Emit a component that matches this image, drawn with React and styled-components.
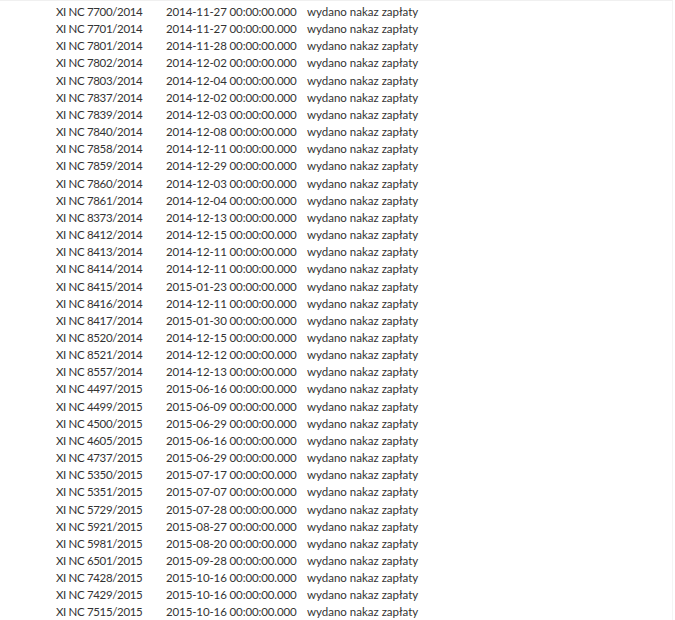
import React from 'react'
import styled, { createGlobalStyle } from 'styled-components'

const rows = [
    ['XI NC 7700/2014', '2014-11-27 00:00:00.000'],
    ['XI NC 7701/2014', '2014-11-27 00:00:00.000'],
    ['XI NC 7801/2014', '2014-11-28 00:00:00.000'],
    ['XI NC 7802/2014', '2014-12-02 00:00:00.000'],
    ['XI NC 7803/2014', '2014-12-04 00:00:00.000'],
    ['XI NC 7837/2014', '2014-12-02 00:00:00.000'],
    ['XI NC 7839/2014', '2014-12-03 00:00:00.000'],
    ['XI NC 7840/2014', '2014-12-08 00:00:00.000'],
    ['XI NC 7858/2014', '2014-12-11 00:00:00.000'],
    ['XI NC 7859/2014', '2014-12-29 00:00:00.000'],
    ['XI NC 7860/2014', '2014-12-03 00:00:00.000'],
    ['XI NC 7861/2014', '2014-12-04 00:00:00.000'],
    ['XI NC 8373/2014', '2014-12-13 00:00:00.000'],
    ['XI NC 8412/2014', '2014-12-15 00:00:00.000'],
    ['XI NC 8413/2014', '2014-12-11 00:00:00.000'],
    ['XI NC 8414/2014', '2014-12-11 00:00:00.000'],
    ['XI NC 8415/2014', '2015-01-23 00:00:00.000'],
    ['XI NC 8416/2014', '2014-12-11 00:00:00.000'],
    ['XI NC 8417/2014', '2015-01-30 00:00:00.000'],
    ['XI NC 8520/2014', '2014-12-15 00:00:00.000'],
    ['XI NC 8521/2014', '2014-12-12 00:00:00.000'],
    ['XI NC 8557/2014', '2014-12-13 00:00:00.000'],
    ['XI NC 4497/2015', '2015-06-16 00:00:00.000'],
    ['XI NC 4499/2015', '2015-06-09 00:00:00.000'],
    ['XI NC 4500/2015', '2015-06-29 00:00:00.000'],
    ['XI NC 4605/2015', '2015-06-16 00:00:00.000'],
    ['XI NC 4737/2015', '2015-06-29 00:00:00.000'],
    ['XI NC 5350/2015', '2015-07-17 00:00:00.000'],
    ['XI NC 5351/2015', '2015-07-07 00:00:00.000'],
    ['XI NC 5729/2015', '2015-07-28 00:00:00.000'],
    ['XI NC 5921/2015', '2015-08-27 00:00:00.000'],
    ['XI NC 5981/2015', '2015-08-20 00:00:00.000'],
    ['XI NC 6501/2015', '2015-09-28 00:00:00.000'],
    ['XI NC 7428/2015', '2015-10-16 00:00:00.000'],
    ['XI NC 7429/2015', '2015-10-16 00:00:00.000'],
    ['XI NC 7515/2015', '2015-10-16 00:00:00.000'],
]

const GlobalStyle = createGlobalStyle`
    body {
        margin: 0;
        background: #fff;
        font-family: Lato, "Open Sans", sans-serif;
    }
`

function App() {
    return (
        <Page>
            <GlobalStyle />
            <Table>
                {rows.map(([sygn, date]) => (
                    <Row key={sygn}>
                        <Cell $spacing="-0.35px">{sygn}</Cell>
                        <Cell $spacing="-0.12px">{date}</Cell>
                        <Cell>wydano nakaz zapłaty</Cell>
                    </Row>
                ))}
            </Table>
        </Page>
    )
}

export default App

const Page = styled.div`
    width: 673px;
    height: 620px;
    border-top: 1px solid #f0f0f0;
    border-right: 1px solid #f4f4f4;
    box-sizing: border-box;
    overflow: hidden;
`
const Table = styled.div`
    padding: 2px 0 0 56px;
`
const Row = styled.div`
    display: grid;
    grid-template-columns: 110px 141px auto;
    height: 17.17px;
    line-height: 17.17px;
    font-size: 11.5px;
    color: #333;
    white-space: nowrap;
`
const Cell = styled.div`
    letter-spacing: ${p => p.$spacing || '0'};
`
